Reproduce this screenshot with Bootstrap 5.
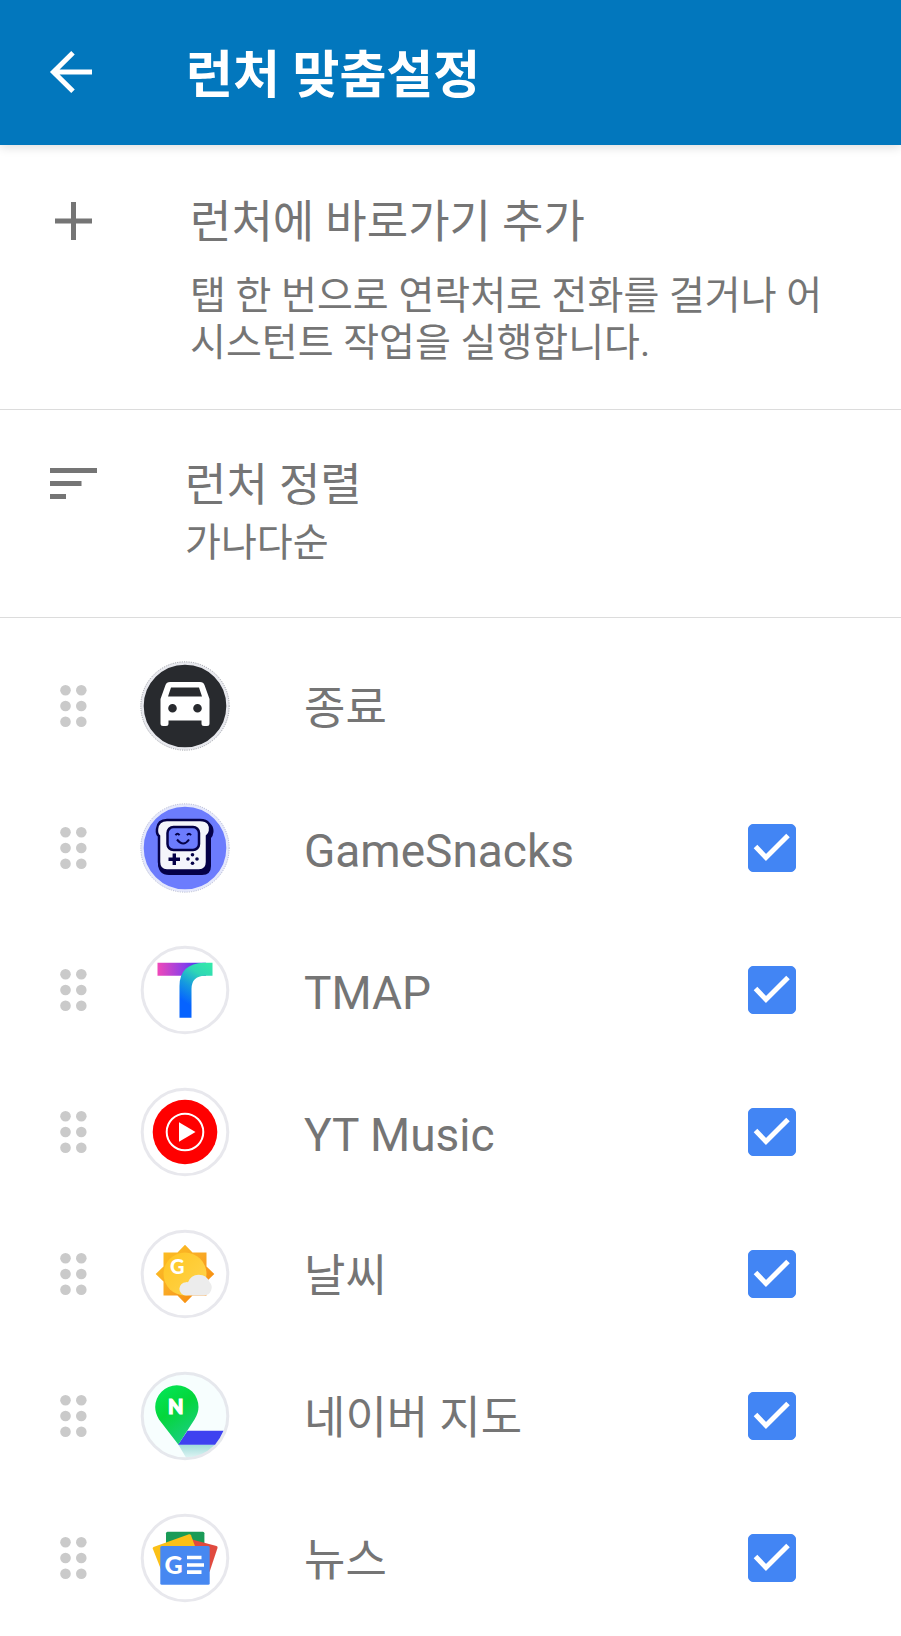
<!DOCTYPE html>
<html lang="ko">
<head>
<meta charset="utf-8">
<meta name="viewport" content="width=device-width, initial-scale=1">
<title>런처 맞춤설정</title>
<link href="https://cdn.jsdelivr.net/npm/bootstrap@5.3.0/dist/css/bootstrap.min.css" rel="stylesheet">
<style>
  body { font-family: Roboto, "Noto Sans CJK KR", sans-serif; color: #757575; background: #fff; }
  .app-header { background: #0277bd; color: #fff; height: 145px; padding-left: 40px; box-shadow: 0 2px 10px rgba(0,0,0,.14); }
  .back-btn { width: 62px; height: 62px; color: #fff; }
  .app-title { font-size: 51px; line-height: 60px; font-weight: 700; margin-left: 84px; padding-top: 6px; }
  .setting { color: inherit; border-bottom: 1px solid #dcdcdc; padding: 50px 56px 42px 48px; text-align: left; }
  .setting-icon { width: 52px; height: 56px; }
  .setting-text { margin-left: 90px; }
  .setting.sort-setting { padding-top: 48px; padding-bottom: 50px; }
  .sort-setting .setting-text { margin-left: 85px; }
  .item-title { font-size: 45px; line-height: 56px; }
  .item-title:lang(en) { font-size: 46px; }
  .item-note { font-size: 39px; line-height: 47px; }
  .add-setting .item-note { margin-top: 22px; }
  .sort-setting .item-note { margin-top: 6px; }
  .launcher-list { padding-top: 17px; }
  .launcher-item { height: 142px; padding: 0 105px 0 58px; }
  .grip { width: 30px; height: 46px; }
  .app-icon { width: 90px; height: 90px; margin-left: 52px; }
  .app-label { margin-left: 74px; padding-top: 6px; }
  .app-check.form-check-input { width: 48px; height: 48px; border-radius: 5px; border-color: #bdbdbd; }
  .app-check.form-check-input:checked { background-color: #4285f4; border-color: #4285f4; background-size: 48px 48px; background-position: center;
    background-image: url("data:image/svg+xml,%3Csvg xmlns='http://www.w3.org/2000/svg' viewBox='0 0 48 48'%3E%3Cpath d='M7.5 22.5L18 33.5L40 11.5' fill='none' stroke='%23fff' stroke-width='5'/%3E%3C/svg%3E"); }
</style>
</head>
<body>
<svg width="0" height="0" class="position-absolute" aria-hidden="true">
  <symbol id="grip" viewBox="0 0 30 46"><g fill="#cacaca"><circle cx="7.500" cy="7.300" r="5.300"/><circle cx="23.300" cy="7.300" r="5.300"/><circle cx="7.500" cy="23" r="5.300"/><circle cx="23.300" cy="23" r="5.300"/><circle cx="7.500" cy="38.700" r="5.300"/><circle cx="23.300" cy="38.700" r="5.300"/></g></symbol>
</svg>

<header class="app-header d-flex align-items-center position-relative">
  <button type="button" class="btn back-btn p-0 border-0 d-flex align-items-center justify-content-center" aria-label="뒤로">
    <svg width="44" height="44" viewBox="0 0 44 44" fill="none" stroke="currentColor" stroke-width="5"><path d="M43 21H4M24 1.800L4.500 21L24 40.200"/></svg>
  </button>
  <h1 class="app-title mb-0">런처 맞춤설정</h1>
</header>

<main>
  <button type="button" class="setting add-setting btn rounded-0 w-100 border-top-0 border-start-0 border-end-0 d-flex align-items-start">
    <svg class="setting-icon flex-shrink-0" viewBox="0 0 52 56" stroke="#757575" stroke-width="5"><path d="M25.500 7V45M7 26H44"/></svg>
    <span class="setting-text">
      <span class="item-title d-block">런처에 바로가기 추가</span>
      <span class="item-note d-block">탭 한 번으로 연락처로 전화를 걸거나 어시스턴트 작업을 실행합니다.</span>
    </span>
  </button>
  <button type="button" class="setting sort-setting btn rounded-0 w-100 border-top-0 border-start-0 border-end-0 d-flex align-items-start">
    <svg class="setting-icon flex-shrink-0" viewBox="0 0 52 56" fill="#757575"><path d="M2 10h47v5H2zM2 23h31.500v5H2zM2 36h16v5H2z"/></svg>
    <span class="setting-text">
      <span class="item-title d-block">런처 정렬</span>
      <span class="item-note d-block">가나다순</span>
    </span>
  </button>

  <ul class="launcher-list list-unstyled mb-0">
    <li class="launcher-item d-flex align-items-center">
      <svg class="grip flex-shrink-0"><use href="#grip"/></svg>
      <svg class="app-icon flex-shrink-0" viewBox="0 0 90 90">
        <circle cx="45" cy="45" r="42.800" fill="#282a2e" stroke="#e8e9ee" stroke-width="3"/>
        <circle cx="45" cy="45" r="44.200" fill="none" stroke="#777a82" stroke-width=".7" stroke-dasharray="1 1.300"/>
        <path fill="#fff" fill-rule="evenodd" d="M30 21H60Q63.500 21 64.500 24L69.500 38V62.500Q69.500 65 67 65H64Q61.500 65 61.500 62.500V59.500H28.500V62.500Q28.500 65 26 65H23Q20.500 65 20.500 62.500V38L25.500 24Q26.500 21 30 21ZM31 26.500L28 35.500H62L59 26.500ZM32.500 43A4.300 4.300 0 1 0 32.500 51.600A4.300 4.300 0 1 0 32.500 43ZM57.500 43A4.300 4.300 0 1 0 57.500 51.600A4.300 4.300 0 1 0 57.500 43Z"/>
      </svg>
      <span class="app-label item-title">종료</span>
    </li>
    <li class="launcher-item d-flex align-items-center">
      <svg class="grip flex-shrink-0"><use href="#grip"/></svg>
      <svg class="app-icon flex-shrink-0" viewBox="0 0 90 90">
        <circle cx="45" cy="45" r="42.800" fill="#6c7cfd" stroke="#e5e8fb" stroke-width="3"/>
        <circle cx="45" cy="45" r="44.200" fill="none" stroke="#989dbb" stroke-width=".7" stroke-dasharray="1 1.300"/>
        <path d="M29 18H63C71 18 74 24 73.500 29Q73 33 71 35V63Q71 72 62 72H29Q18 72 18 60V33Z" fill="#050148"/>
        <path d="M27 17H60C69 17 71 23 70 28Q69.500 31 67 33V59Q67 67.500 59 67.500H27Q19 67.500 19 59V33Q16.500 31 17 26Q18 17 27 17Z" fill="#f4f5fb" stroke="#050148" stroke-width="2.500"/>
        <rect x="27.500" y="24" width="31.500" height="23" rx="6" fill="#6c7cfd" stroke="#050148" stroke-width="2.500"/>
        <path d="M35.500 32.300Q37.500 29.300 39.500 32.300M47 32.300Q49 29.300 51 32.300M37 36.500Q43.500 44.500 49 36.500" fill="none" stroke="#050148" stroke-width="2"/>
        <path d="M34.300 50.500V62M28.500 56.200H40" fill="none" stroke="#050148" stroke-width="3.400"/>
        <g fill="#050148"><circle cx="52.500" cy="51.700" r="1.800"/><circle cx="52.500" cy="60.300" r="1.800"/><circle cx="48" cy="56" r="1.800"/><circle cx="57" cy="56" r="1.800"/></g>
      </svg>
      <label class="app-label item-title flex-grow-1" lang="en" for="app-games">GameSnacks</label>
      <input class="form-check-input app-check m-0 flex-shrink-0" type="checkbox" id="app-games" checked>
    </li>
    <li class="launcher-item d-flex align-items-center">
      <svg class="grip flex-shrink-0"><use href="#grip"/></svg>
      <svg class="app-icon flex-shrink-0" viewBox="0 0 90 90">
        <defs>
          <linearGradient id="tmapBar"><stop offset="0" stop-color="#f048b9"/><stop offset=".55" stop-color="#8c3fe8"/><stop offset=".85" stop-color="#4b35ee"/></linearGradient>
          <linearGradient id="tmapStem" gradientUnits="userSpaceOnUse" x1="68" y1="18" x2="43" y2="56"><stop offset="0" stop-color="#34e8aa"/><stop offset=".3" stop-color="#2fd7b5"/><stop offset=".65" stop-color="#1598e0"/><stop offset="1" stop-color="#0663ff"/></linearGradient>
        </defs>
        <circle cx="45" cy="45" r="42.800" fill="#fff" stroke="#e8e8ed" stroke-width="3"/>
        <path d="M17.500 17.700H66V30.700H17.500Z" fill="url(#tmapBar)"/>
        <path d="M72.500 17.700V30.700H65Q51.500 31 51.500 44V72.700H39.500V41Q39.500 18.500 64 17.700Z" fill="url(#tmapStem)"/>
      </svg>
      <label class="app-label item-title flex-grow-1" lang="en" for="app-tmap">TMAP</label>
      <input class="form-check-input app-check m-0 flex-shrink-0" type="checkbox" id="app-tmap" checked>
    </li>
    <li class="launcher-item d-flex align-items-center">
      <svg class="grip flex-shrink-0"><use href="#grip"/></svg>
      <svg class="app-icon flex-shrink-0" viewBox="0 0 90 90">
        <circle cx="45" cy="45" r="42.800" fill="#fff" stroke="#e8e8ed" stroke-width="3"/>
        <circle cx="45" cy="45" r="32.300" fill="#f00"/>
        <circle cx="45" cy="45" r="18.300" fill="none" stroke="#fff" stroke-width="2"/>
        <path d="M39 35.300L55.500 45L39 54.700Z" fill="#fff"/>
      </svg>
      <label class="app-label item-title flex-grow-1" lang="en" for="app-music">YT Music</label>
      <input class="form-check-input app-check m-0 flex-shrink-0" type="checkbox" id="app-music" checked>
    </li>
    <li class="launcher-item d-flex align-items-center">
      <svg class="grip flex-shrink-0"><use href="#grip"/></svg>
      <svg class="app-icon flex-shrink-0" viewBox="0 0 90 90">
        <defs>
          <linearGradient id="sunRays" x1="0" y1="0" x2="1" y2="1"><stop offset="0" stop-color="#fcc320"/><stop offset=".5" stop-color="#f9a825"/><stop offset="1" stop-color="#f57c00"/></linearGradient>
          <linearGradient id="sunDisc" x1="0" y1="0" x2="1" y2="1"><stop offset="0" stop-color="#ffc522"/><stop offset="1" stop-color="#ffd54f"/></linearGradient>
        </defs>
        <circle cx="45" cy="45" r="42.800" fill="#fff" stroke="#e8e8ed" stroke-width="3"/>
        <path d="M45 15.700L52.500 23.500H66.500V37.500L74.300 45L66.500 52.500V66.500H52.500L45 74.300L37.500 66.500H23.500V52.500L15.700 45L23.500 37.500V23.500H37.500Z" fill="url(#sunRays)"/>
        <circle cx="45" cy="45" r="21.500" fill="url(#sunDisc)"/>
        <path d="M46 66.500A6.500 6.500 0 0 1 46 53.200Q47 53 48 53.300A11.500 11.500 0 0 1 69.500 53A8 8 0 0 1 64 66.500Z" fill="#ececec"/>
        <text x="30" y="44.500" font-family="Lato, sans-serif" font-weight="900" font-size="20" fill="#fff">G</text>
      </svg>
      <label class="app-label item-title flex-grow-1" for="app-weather">날씨</label>
      <input class="form-check-input app-check m-0 flex-shrink-0" type="checkbox" id="app-weather" checked>
    </li>
    <li class="launcher-item d-flex align-items-center">
      <svg class="grip flex-shrink-0"><use href="#grip"/></svg>
      <svg class="app-icon flex-shrink-0" viewBox="0 0 90 90">
        <defs>
          <linearGradient id="pinFill" x1="0" y1="0" x2=".5" y2="1"><stop offset="0" stop-color="#03e85c"/><stop offset=".5" stop-color="#04d63a"/><stop offset="1" stop-color="#19cf7c"/></linearGradient>
          <linearGradient id="waterFill" x1="0" y1="0" x2="0" y2="1"><stop offset="0" stop-color="#9fdcd9"/><stop offset="1" stop-color="#eefafa"/></linearGradient>
          <clipPath id="mapDisc"><circle cx="45" cy="45" r="43.500"/></clipPath>
        </defs>
        <circle cx="45" cy="45" r="42.800" fill="#f7fefe"/>
        <g clip-path="url(#mapDisc)">
          <path d="M38.300 73.500H90V90H48Z" fill="url(#waterFill)"/>
        </g>
        <circle cx="45" cy="45" r="42.800" fill="none" stroke="#e6e8ed" stroke-width="3"/>
        <path d="M47.500 59.700H83.500Q80.500 67 75 73.700H38Z" fill="#3e42f0"/>
        <path d="M36.800 14.200A21.800 21.800 0 0 1 58.500 36Q58.500 42 54.500 48.500L38.300 73.500L19 48.500Q15.200 42 15.200 36A21.800 21.800 0 0 1 36.800 14.200Z" fill="url(#pinFill)"/>
        <text x="28" y="42.800" font-family="Lato, sans-serif" font-weight="900" font-size="20" fill="#fff" stroke="#fff" stroke-width="1.200">N</text>
      </svg>
      <label class="app-label item-title flex-grow-1" for="app-map">네이버 지도</label>
      <input class="form-check-input app-check m-0 flex-shrink-0" type="checkbox" id="app-map" checked>
    </li>
    <li class="launcher-item d-flex align-items-center">
      <svg class="grip flex-shrink-0"><use href="#grip"/></svg>
      <svg class="app-icon flex-shrink-0" viewBox="0 0 90 90">
        <circle cx="45" cy="45" r="42.800" fill="#fff" stroke="#e8e8ed" stroke-width="3"/>
        <rect x="26" y="18.700" width="38.400" height="26" rx="1.500" fill="#1a9b57"/>
        <path d="M52 26.500L76.500 33Q78 33.500 77.500 35L69.500 59L50 45Z" fill="#e04a3f"/>
        <path d="M13.500 34L49 21.300Q50.500 21 51 22.300L56 36L21 56.500L12.700 35.500Q12.500 34.500 13.500 34Z" fill="#fbc017"/>
        <rect x="20.300" y="33" width="49.400" height="38.700" rx="1.500" fill="#4788f1"/>
        <path d="M47 42.700H61.500V46.300H47ZM47 50.200H64V53.800H47ZM47 57.300H61.500V60.900H47Z" fill="#fff"/>
        <text x="24.500" y="60.700" font-family="Lato, sans-serif" font-weight="900" font-size="25" fill="#fff">G</text>
      </svg>
      <label class="app-label item-title flex-grow-1" for="app-news">뉴스</label>
      <input class="form-check-input app-check m-0 flex-shrink-0" type="checkbox" id="app-news" checked>
    </li>
  </ul>
</main>
<script src="https://cdn.jsdelivr.net/npm/bootstrap@5.3.0/dist/js/bootstrap.bundle.min.js"></script>
</body>
</html>
